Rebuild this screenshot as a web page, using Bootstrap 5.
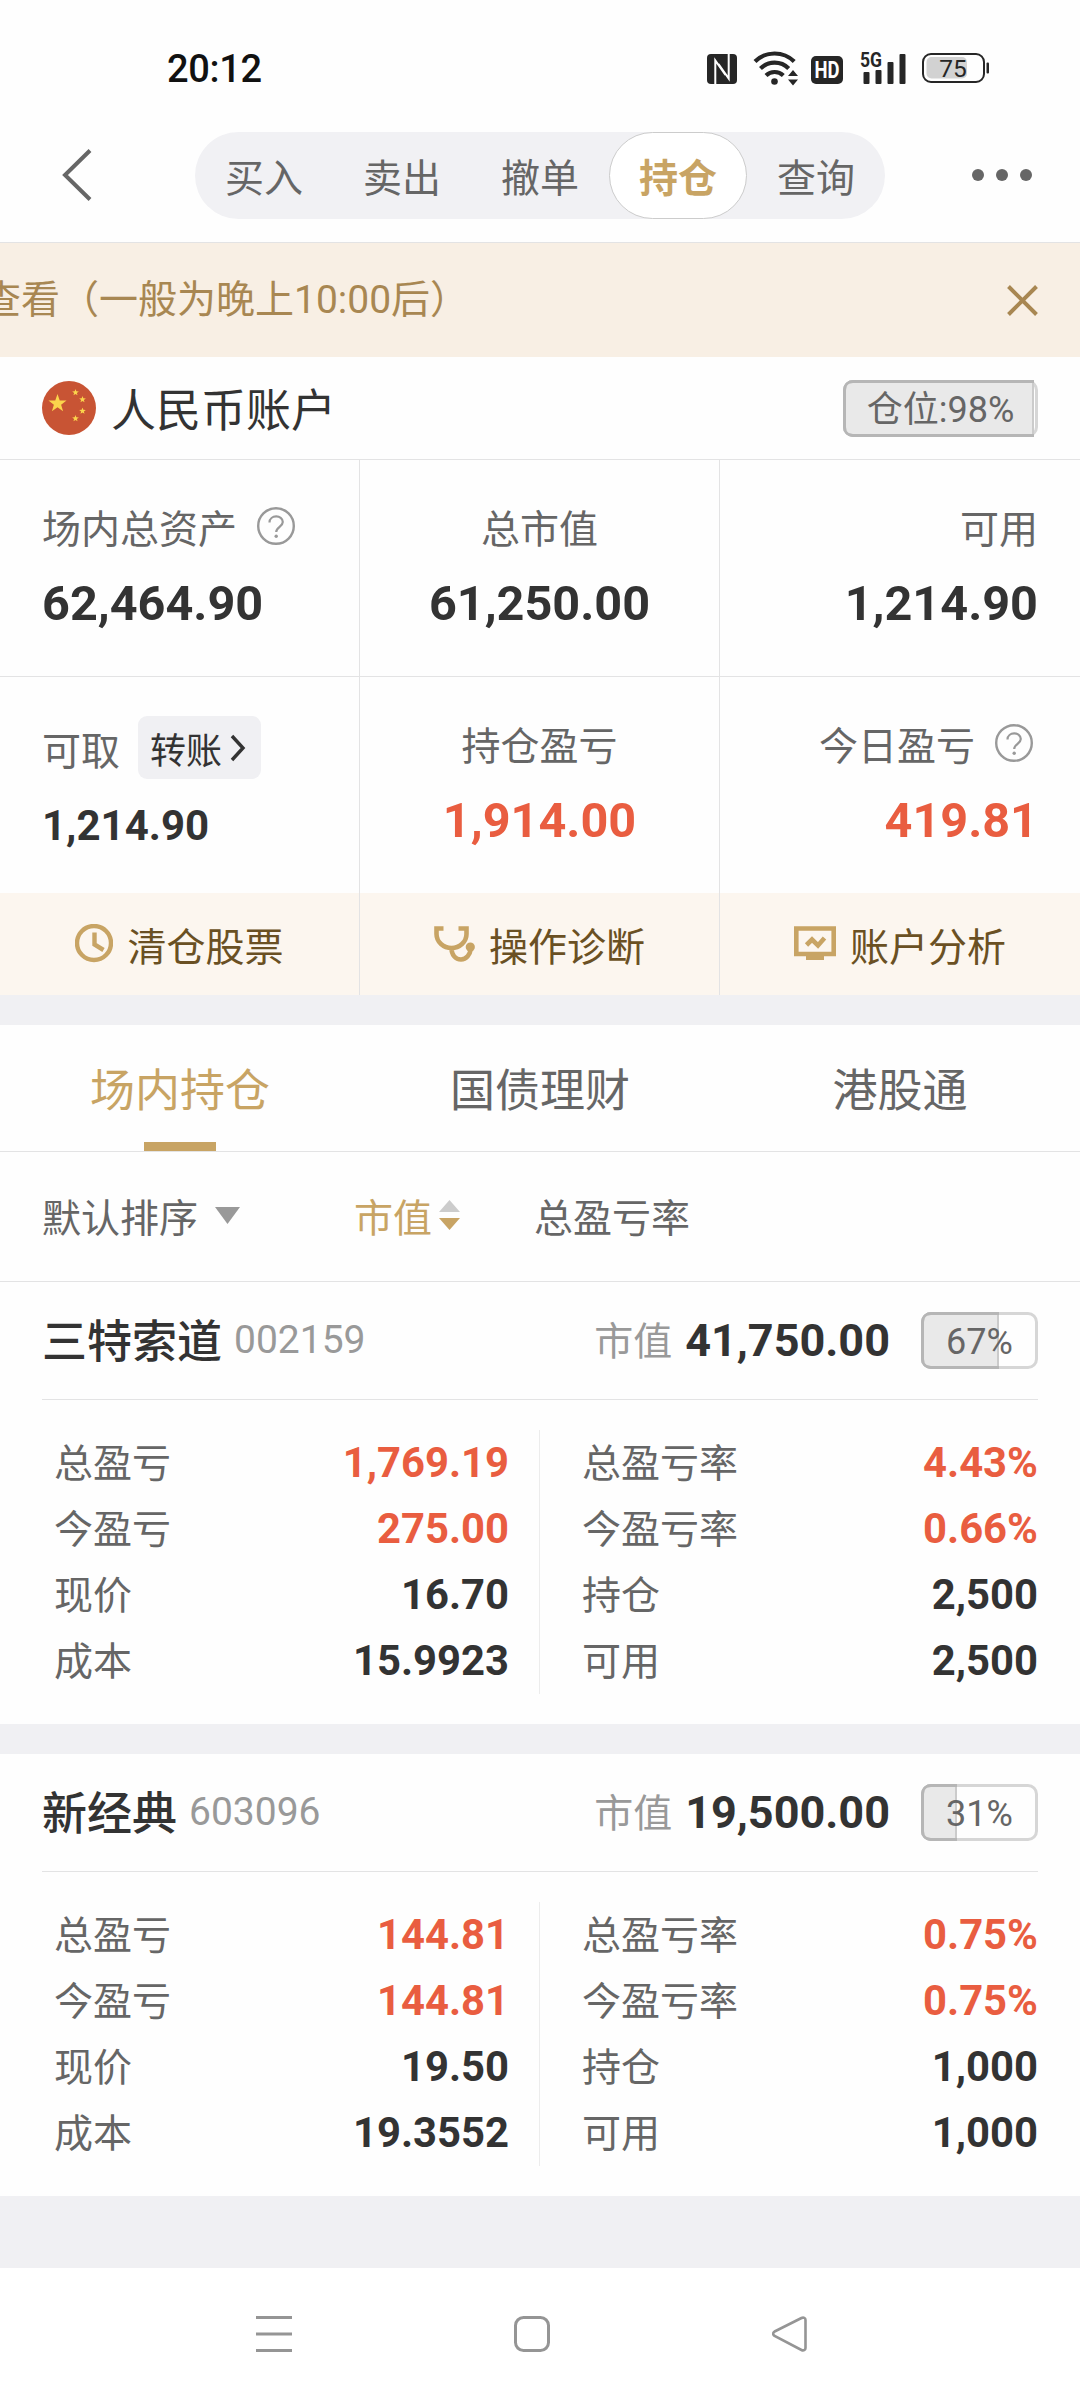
<!DOCTYPE html>
<html lang="zh-CN">
<head>
<meta charset="utf-8">
<meta name="viewport" content="width=device-width, initial-scale=1">
<title>持仓</title>
<link href="https://cdn.jsdelivr.net/npm/bootstrap@5.3.0/dist/css/bootstrap.min.css" rel="stylesheet">
<style>
:root{--gold:#c8a464;--ink:#333;--sub:#666;--faint:#999;--up:#e95d40;--rule:#e3e3e4;--ground:#f0f0f3}
body{width:1080px;height:2400px;overflow:hidden;background:#fefefe;color:var(--ink);font-family:"Noto Sans CJK SC",Roboto,sans-serif;font-size:39px;line-height:48px}
svg{display:block;flex:none}
.num{font-family:Roboto,"Noto Sans CJK SC",sans-serif;font-weight:700}
.up{color:var(--up)}
.sub{color:var(--sub)}
.faint{color:var(--faint)}
.statusbar{height:132px;padding:45px 90px 0 167px}
.clock{font-family:Roboto,sans-serif;font-size:38px;font-weight:500;color:#111;letter-spacing:-.3px}
.topbar{height:111px;padding:0 47px 24px 62px;border-bottom:1px solid var(--rule)}
.seg{height:87px;width:690px;border-radius:44px;background:#f1f1f4;margin-left:103px}
.seg .nav-link{width:138px;height:87px;padding:0;line-height:85px;border-radius:44px;border:1px solid transparent;color:var(--sub)}
.seg .nav-link.active{background:#fff;border-color:#ccc;color:var(--gold);font-weight:700}
.notice{height:114px;background:#f8efe4;color:#a88752;padding-right:42px}
.notice-text{font-family:Roboto,"Noto Sans CJK SC",sans-serif;margin-left:-18px;white-space:nowrap}
.acct{height:103px;padding:0 42px;border-bottom:1px solid var(--rule)}
.acct-name{font-size:45px;margin-left:15px}
.gauge{position:relative;height:57px;border-radius:10px;box-shadow:inset 0 0 0 3px #d6d6d6;font-family:Roboto,"Noto Sans CJK SC",sans-serif;font-size:36px;line-height:61px;color:var(--sub);text-align:center}
.gauge-fill{position:absolute;left:0;top:0;height:57px;border-radius:10px 0 0 10px;background:#e9e9e9;box-shadow:inset 3px 0 #b6b6b6,inset 0 3px #b6b6b6,inset 0 -3px #b6b6b6,inset -2px 0 #cbcbcb}
.gauge span{position:relative}
.g-lg{width:195px}.g-sm{width:117px;margin-left:31px}
.cell{width:360px;height:217px;padding:42px 42px 0;border-right:1px solid var(--rule);border-bottom:1px solid var(--rule)}
.cell:last-child,.act:last-child{border-right:0}
.low .cell{height:216px;border-bottom:0}
.cell .num{font-size:48.600px;margin-top:30px}
.low .first{padding-top:39px}
.low .first .num{font-size:42px;margin-top:23px}
.low .first .sub{line-height:46px}
.transfer{width:123px;height:63px;border-radius:9px;background:#f0f0f3;color:var(--ink);font-size:36px;line-height:60px;padding:0 0 0 12px;border:0;margin-left:18px}
.act{width:360px;height:102px;background:#fcf6ef;border-right:1px solid var(--rule);color:#6a5023;line-height:98px}
.act svg{margin-right:14px}
.band{height:30px;background:var(--ground)}
.hold-tabs{height:127px;border-bottom:1px solid var(--rule)}
.hold-tabs .nav-link{width:360px;height:126px;padding:0;font-size:45px;line-height:125px;color:var(--sub);text-align:center}
.hold-tabs .nav-link.active{color:var(--gold);background:linear-gradient(var(--gold),var(--gold)) center bottom/72px 9px no-repeat}
.sorts{height:130px;padding:0 42px 3px;border-bottom:1px solid var(--rule);line-height:126px}
.hold{height:442px;padding:0 42px}
.hold-head{height:118px;border-bottom:1px solid var(--rule)}
.hold-name{font-size:45px;font-weight:500;padding-bottom:3px}
.hold-head .mv{padding-bottom:6px}
.code{font-family:Roboto,sans-serif;margin-left:12px;padding-bottom:1px}
.hold-body{padding-top:30px}
.half{height:264px}
.half .d-flex{height:66px}
.half .sub{padding-bottom:6px}
.half .num{font-size:41.800px}
.h-left{width:498px;padding:0 30px 0 12px;border-right:1px solid #ececec}
.h-right{width:498px;padding-left:42px}
.total{font-size:45px;margin-left:13px}
.sysbar{height:132px;background:#fff;padding:0 272px 0 256px}
</style>
<script src="https://cdn.jsdelivr.net/npm/bootstrap@5.3.0/dist/js/bootstrap.bundle.min.js"></script>
</head>
<body>
<svg width="0" height="0" class="position-absolute">
  <symbol id="help" viewBox="0 0 38 38"><circle cx="19" cy="19" r="17.800" fill="none" stroke="#999" stroke-width="2.400"/><path d="M12.500 15.500C12.500 7.500 25.800 7.500 25.800 15c0 4.600-6.600 5-6.600 10" fill="none" stroke="#999" stroke-width="2.200"/><circle cx="19.200" cy="29.300" r="1.700" fill="#999"/></symbol>
  <symbol id="star" viewBox="-10 -10 20 20"><path fill="#fbd54c" d="M0-10L2.360-3.240 9.510-3.090 3.800 1.240 5.880 8.090 0 4 -5.880 8.090 -3.800 1.240 -9.510-3.090 -2.360-3.240Z"/></symbol>
</svg>

<header class="statusbar d-flex justify-content-between align-items-start">
  <div class="clock">20:12</div>
  <svg width="284" height="48" viewBox="706 45 284 48">
    <g fill="#262626">
      <rect x="707" y="54" width="30" height="30" rx="4"/>
      <path d="M715.300 84V60.500L725.500 75M728.700 54V78.500L718.500 64" fill="none" stroke="#fff" stroke-width="2"/>
      <g fill="none" stroke="#262626" stroke-width="4.200">
        <path d="M755 61.500a28 28 0 0 1 39.200 0M760.500 68.500a20 20 0 0 1 28.200 0M766 75.500a12.500 12.500 0 0 1 17.300 0"/>
      </g>
      <circle cx="774.500" cy="81.500" r="3.300"/>
      <path d="M788 76l5-6 5 6zM788 79.500h10l-5 6z"/>
      <rect x="811" y="56" width="32" height="28" rx="5"/>
      <rect x="863.500" y="72" width="6" height="12" rx="1"/><rect x="875.500" y="70" width="6" height="14" rx="1"/><rect x="887.500" y="62" width="6" height="22" rx="1"/><rect x="899.500" y="54" width="6" height="30" rx="1"/>
      <rect x="986.500" y="62.500" width="2.500" height="11" rx="1"/>
    </g>
    <rect x="926.500" y="57" width="40.500" height="21.500" rx="5" fill="#d2d2d2"/>
    <rect x="923" y="54" width="61" height="28" rx="8" fill="none" stroke="#262626" stroke-width="2"/>
    <g font-family="Roboto" fill="#262626">
      <text x="827" y="78" font-size="23" font-weight="700" fill="#fff" text-anchor="middle" textLength="25" lengthAdjust="spacingAndGlyphs">HD</text>
      <text x="860" y="66.500" font-size="20" font-weight="700" textLength="22" lengthAdjust="spacingAndGlyphs">5G</text>
      <text x="953" y="77" font-size="24.500" text-anchor="middle">75</text>
    </g>
  </svg>
</header>

<nav class="topbar d-flex align-items-center">
  <svg width="30" height="52" viewBox="0 0 30 52"><path d="M28 1.500L3 26l25 24.500" fill="none" stroke="#666" stroke-width="4"/></svg>
  <div class="seg nav nav-pills flex-nowrap text-center">
    <a class="nav-link">买入</a><a class="nav-link">卖出</a><a class="nav-link">撤单</a><a class="nav-link active">持仓</a><a class="nav-link">查询</a>
  </div>
  <svg class="ms-auto" width="62" height="14" viewBox="0 0 62 14" fill="#666"><circle cx="7" cy="7" r="6"/><circle cx="31" cy="7" r="6"/><circle cx="55" cy="7" r="6"/></svg>
</nav>

<div class="notice d-flex align-items-center justify-content-between overflow-hidden">
  <div class="notice-text">查看（一般为晚上10:00后）</div>
  <svg width="31" height="31" viewBox="0 0 31 31"><path d="M1.500 1.500l28 28M29.500 1.500l-28 28" stroke="#a88752" stroke-width="4"/></svg>
</div>

<section>
  <div class="acct d-flex align-items-center">
    <svg width="54" height="54" viewBox="0 0 54 54"><circle cx="27" cy="27" r="27" fill="#c85434"/><use href="#star" x="6" y="13" width="19" height="19"/><use href="#star" x="30" y="8" width="7" height="7"/><use href="#star" x="37" y="15" width="7" height="7"/><use href="#star" x="37" y="26.500" width="7" height="7"/><use href="#star" x="30" y="34" width="7" height="7"/></svg>
    <div class="acct-name">人民币账户</div>
    <div class="gauge g-lg ms-auto"><div class="gauge-fill" style="width:98%"></div><span>仓位:98%</span></div>
  </div>
  <div class="d-flex">
    <div class="cell"><div class="sub d-flex align-items-center">场内总资产<svg style="margin-left:20px" width="38" height="38"><use href="#help"/></svg></div><div class="num">62,464.90</div></div>
    <div class="cell text-center"><div class="sub">总市值</div><div class="num">61,250.00</div></div>
    <div class="cell text-end"><div class="sub">可用</div><div class="num">1,214.90</div></div>
  </div>
  <div class="d-flex low">
    <div class="cell first"><div class="sub d-flex align-items-center">可取<button class="transfer d-flex align-items-center" type="button">转账<svg class="ms-2" width="16" height="28" viewBox="0 0 16 28"><path d="M2 2l11 12L2 26" fill="none" stroke="#333" stroke-width="3.400"/></svg></button></div><div class="num">1,214.90</div></div>
    <div class="cell text-center"><div class="sub">持仓盈亏</div><div class="num up">1,914.00</div></div>
    <div class="cell text-end"><div class="sub d-flex align-items-center justify-content-end">今日盈亏<svg style="margin:0 5px 0 20px" width="38" height="38"><use href="#help"/></svg></div><div class="num up">419.81</div></div>
  </div>
  <div class="d-flex">
    <div class="act d-flex align-items-center justify-content-center"><svg width="38" height="40" viewBox="0 0 38 40" fill="none" stroke="#c8a464" stroke-width="4.400"><circle cx="19" cy="19" r="17"/><path d="M19.500 8.500v12l9 5.500"/></svg>清仓股票</div>
    <div class="act d-flex align-items-center justify-content-center"><svg width="41" height="40" viewBox="0 0 41 40" fill="none" stroke="#c8a464" stroke-width="4.600"><path d="M9.500 4.500H2.500v5.500c0 8 7 14 15 14s15-6 15-14V4.500H24.500M17.500 24c0 7 4 11.500 9.500 11.500s9-5 9.800-10.500"/><circle cx="36.300" cy="23" r="4.600" fill="#c8a464" stroke="none"/></svg>操作诊断</div>
    <div class="act d-flex align-items-center justify-content-center"><svg width="42" height="40" viewBox="0 0 42 40" fill="none" stroke="#c8a464" stroke-width="4.600"><path d="M2.300 4.500h37.400v25.500H2.300z"/><path d="M12.500 21l5.500-5.500 6 6L30.500 14"/><path d="M12 33.500h18" stroke-width="5"/></svg>账户分析</div>
  </div>
</section>

<div class="band"></div>

<nav class="hold-tabs nav flex-nowrap">
  <a class="nav-link active">场内持仓</a><a class="nav-link">国债理财</a><a class="nav-link">港股通</a>
</nav>
<div class="sorts sub d-flex align-items-center">
  <div class="d-flex align-items-center" style="width:312px">默认排序<svg width="26" height="22" viewBox="0 0 26 22" style="margin-left:17px"><path d="M0 3h25L12.500 20z" fill="#999"/></svg></div>
  <div class="d-flex align-items-center" style="width:180px;color:#c8a464">市值<svg width="21" height="32" viewBox="0 0 21 32" style="margin-left:7px"><path d="M0 13L10.500 1 21 13z" fill="#ccc"/><path d="M0 19h21L10.500 31z" fill="#c8a464"/></svg></div>
  <div>总盈亏率</div>
</div>

<article class="hold">
  <div class="hold-head d-flex align-items-center">
    <div class="hold-name">三特索道</div><div class="code faint">002159</div>
    <div class="mv faint ms-auto">市值</div><div class="num total">41,750.00</div>
    <div class="gauge g-sm"><div class="gauge-fill" style="width:67%"></div><span>67%</span></div>
  </div>
  <div class="hold-body d-flex">
    <div class="half h-left">
      <div class="d-flex align-items-center justify-content-between"><span class="sub">总盈亏</span><span class="num up">1,769.19</span></div>
      <div class="d-flex align-items-center justify-content-between"><span class="sub">今盈亏</span><span class="num up">275.00</span></div>
      <div class="d-flex align-items-center justify-content-between"><span class="sub">现价</span><span class="num">16.70</span></div>
      <div class="d-flex align-items-center justify-content-between"><span class="sub">成本</span><span class="num">15.9923</span></div>
    </div>
    <div class="half h-right">
      <div class="d-flex align-items-center justify-content-between"><span class="sub">总盈亏率</span><span class="num up">4.43%</span></div>
      <div class="d-flex align-items-center justify-content-between"><span class="sub">今盈亏率</span><span class="num up">0.66%</span></div>
      <div class="d-flex align-items-center justify-content-between"><span class="sub">持仓</span><span class="num">2,500</span></div>
      <div class="d-flex align-items-center justify-content-between"><span class="sub">可用</span><span class="num">2,500</span></div>
    </div>
  </div>
</article>

<div class="band"></div>

<article class="hold">
  <div class="hold-head d-flex align-items-center">
    <div class="hold-name">新经典</div><div class="code faint">603096</div>
    <div class="mv faint ms-auto">市值</div><div class="num total">19,500.00</div>
    <div class="gauge g-sm"><div class="gauge-fill" style="width:31%"></div><span>31%</span></div>
  </div>
  <div class="hold-body d-flex">
    <div class="half h-left">
      <div class="d-flex align-items-center justify-content-between"><span class="sub">总盈亏</span><span class="num up">144.81</span></div>
      <div class="d-flex align-items-center justify-content-between"><span class="sub">今盈亏</span><span class="num up">144.81</span></div>
      <div class="d-flex align-items-center justify-content-between"><span class="sub">现价</span><span class="num">19.50</span></div>
      <div class="d-flex align-items-center justify-content-between"><span class="sub">成本</span><span class="num">19.3552</span></div>
    </div>
    <div class="half h-right">
      <div class="d-flex align-items-center justify-content-between"><span class="sub">总盈亏率</span><span class="num up">0.75%</span></div>
      <div class="d-flex align-items-center justify-content-between"><span class="sub">今盈亏率</span><span class="num up">0.75%</span></div>
      <div class="d-flex align-items-center justify-content-between"><span class="sub">持仓</span><span class="num">1,000</span></div>
      <div class="d-flex align-items-center justify-content-between"><span class="sub">可用</span><span class="num">1,000</span></div>
    </div>
  </div>
</article>

<div class="band" style="height:72px"></div>

<footer class="sysbar d-flex align-items-center justify-content-between">
  <svg width="36" height="36" viewBox="0 0 36 36"><path d="M0 1.500h36M0 18h36M0 34.500h36" stroke="#959595" stroke-width="3"/></svg>
  <svg width="36" height="36" viewBox="0 0 36 36"><rect x="1.500" y="1.500" width="33" height="33" rx="8" fill="none" stroke="#959595" stroke-width="3"/></svg>
  <svg width="36" height="36" viewBox="0 0 36 36"><path d="M2.600 15.500L29.500 2c2-1 4 0 4 2v28c0 2-2 3-4 2L2.600 20c-2-1.500-2-3 0-4.500z" fill="none" stroke="#959595" stroke-width="2.600"/></svg>
</footer>
</body>
</html>
